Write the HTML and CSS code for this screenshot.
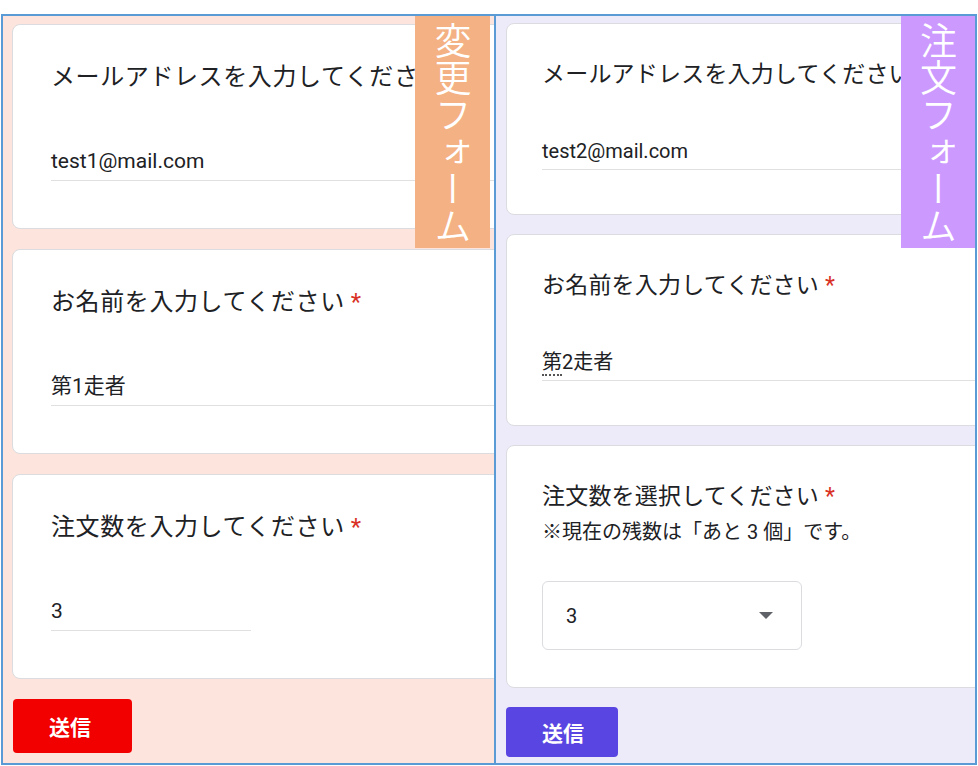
FILE: index.html
```html
<!DOCTYPE html>
<html lang="ja">
<head>
  <meta charset="UTF-8">
  <title>変更フォーム / 注文フォーム</title>
  <link rel="stylesheet" href="styles.css">
</head>
<body>
  <div id="bingkai">
    <!-- 変更フォーム -->
    <div class="panel panel-ubah">
      <div class="kartu">
        <p class="judul">メールアドレスを入力してください<span class="wajib">*</span></p>
        <div class="isian">test1@mail.com</div>
      </div>
      <div class="kartu">
        <p class="judul">お名前を入力してください<span class="wajib">*</span></p>
        <div class="isian">第1走者</div>
      </div>
      <div class="kartu">
        <p class="judul">注文数を入力してください<span class="wajib">*</span></p>
        <div class="isian pendek">3</div>
      </div>
      <button class="kirim">送信</button>
      <div class="label-tag">変更フォーム</div>
    </div>

    <!-- 注文フォーム -->
    <div class="panel panel-pesan">
      <div class="kartu">
        <p class="judul">メールアドレスを入力してください<span class="wajib">*</span></p>
        <div class="isian">test2@mail.com</div>
      </div>
      <div class="kartu">
        <p class="judul">お名前を入力してください<span class="wajib">*</span></p>
        <div class="isian"><span class="titik">第</span>2走者</div>
      </div>
      <div class="kartu kartu-pilih">
        <p class="judul">注文数を選択してください<span class="wajib">*</span></p>
        <p class="catatan">※現在の残数は「あと 3 個」です。</p>
        <div class="pilihan">
          <span>3</span>
          <svg width="14" height="7" viewBox="0 0 14 7"><path d="M0 0 L14 0 L7 7 Z" fill="#5f6368"/></svg>
        </div>
      </div>
      <button class="kirim">送信</button>
      <div class="label-tag">注文フォーム</div>
    </div>
  </div>
</body>
</html>
```

FILE: styles.css
```css
body {
  margin: 0;
  padding: 14px 0 0 1px;
  background: #fff;
  font-family: 'Roboto', 'Noto Sans CJK JP', sans-serif;
  color: #202124;
}

#bingkai {
  display: flex;
}

.panel {
  position: relative;
  overflow: hidden;
  height: 751px;
  box-sizing: border-box;
  border: 2px solid #5b9bd5;
  display: flex;
  flex-direction: column;
  align-items: flex-start;
}

.panel-ubah {
  width: 495px;
  background: #fde4dc;
  padding: 8px 0 0 9px;
  gap: 20px;
}

.panel-pesan {
  width: 481px;
  border-left: none;
  background: #edebf9;
  padding: 7px 0 0 10px;
  gap: 19px;
}

.kartu {
  flex-shrink: 0;
  width: 700px;
  background: #fff;
  border: 1px solid #dadce0;
  border-radius: 8px;
  box-sizing: border-box;
}

.judul {
  margin: 0;
  white-space: nowrap;
}

.wajib {
  color: #d93025;
  margin-left: 6px;
}

.isian {
  white-space: nowrap;
  border-bottom: 1px solid #e0e0e0;
}

/* kiri: sedikit lebih besar */
.panel-ubah .kartu {
  height: 205px;
  padding: 37px 0 0 38px;
}

.panel-ubah .judul {
  font-size: 24px;
  line-height: 30px;
  letter-spacing: 0.6px;
}

.panel-ubah .isian {
  margin-top: 56px;
  font-size: 21px;
  line-height: 26px;
  padding-bottom: 6px;
}

.panel-ubah .isian.pendek {
  width: 200px;
}

/* kanan */
.panel-pesan .kartu {
  height: 192px;
  padding: 37px 0 0 35px;
}

.panel-pesan .kartu-pilih {
  height: 243px;
}

.panel-pesan .judul {
  font-size: 23px;
  line-height: 28px;
  letter-spacing: 0.2px;
}

.panel-pesan .isian {
  margin-top: 50px;
  font-size: 20px;
  line-height: 24px;
  padding-bottom: 6px;
}

.titik {
  border-bottom: 2px dotted #555;
}

.catatan {
  margin: 8px 0 0;
  font-size: 20px;
  line-height: 26px;
  white-space: nowrap;
}

.pilihan {
  margin-top: 36px;
  width: 260px;
  height: 69px;
  box-sizing: border-box;
  border: 1px solid #dadce0;
  border-radius: 6px;
  display: flex;
  align-items: center;
  justify-content: space-between;
  padding: 0 28px 0 23px;
  font-size: 20px;
}

.kirim {
  border: none;
  border-radius: 4px;
  color: #fff;
  font-family: 'Roboto', 'Noto Sans CJK JP', sans-serif;
  font-weight: bold;
  font-size: 21px;
  text-align: left;
  cursor: pointer;
}

.panel-ubah .kirim {
  width: 119px;
  height: 54px;
  margin-left: 1px;
  padding: 0 0 0 36px;
  background: #f20000;
}

.panel-pesan .kirim {
  width: 112px;
  height: 50px;
  padding: 0 0 0 36px;
  background: #5945e1;
}

.label-tag {
  position: absolute;
  top: 0;
  height: 232px;
  writing-mode: vertical-rl;
  display: flex;
  align-items: center;
  box-sizing: border-box;
  padding-top: 6px;
  color: #fff;
  font-family: 'Noto Sans CJK JP', sans-serif;
  font-weight: 350;
  font-size: 37px;
  line-height: 1;
}

.panel-ubah .label-tag {
  right: 4px;
  width: 75px;
  background: #f4b183;
}

.panel-pesan .label-tag {
  right: 0;
  width: 74px;
  background: #cc99ff;
}
```
